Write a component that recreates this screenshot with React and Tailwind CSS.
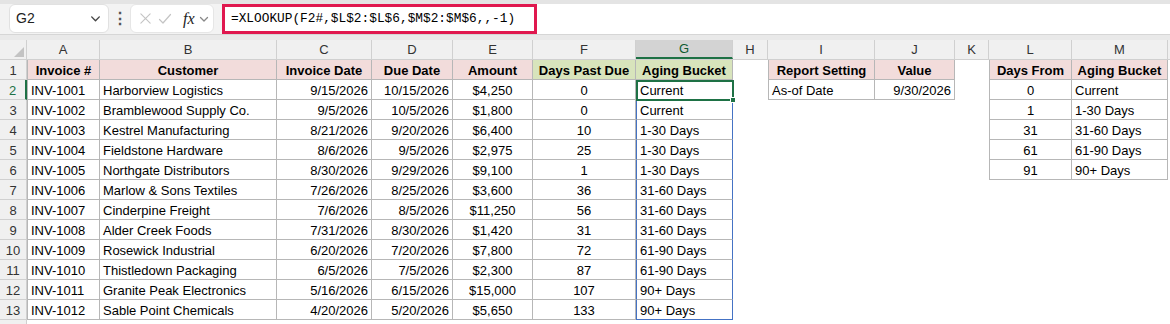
import clsx from 'clsx';

const COLS = [
  { key: 'A', w: 73 },
  { key: 'B', w: 177 },
  { key: 'C', w: 95 },
  { key: 'D', w: 81 },
  { key: 'E', w: 80 },
  { key: 'F', w: 103 },
  { key: 'G', w: 97 },
  { key: 'H', w: 35 },
  { key: 'I', w: 107 },
  { key: 'J', w: 80 },
  { key: 'K', w: 34 },
  { key: 'L', w: 83 },
  { key: 'M', w: 96 },
];

const invoices = [
  ['INV-1001', 'Harborview Logistics', '9/15/2026', '10/15/2026', '$4,250', '0', 'Current'],
  ['INV-1002', 'Bramblewood Supply Co.', '9/5/2026', '10/5/2026', '$1,800', '0', 'Current'],
  ['INV-1003', 'Kestrel Manufacturing', '8/21/2026', '9/20/2026', '$6,400', '10', '1-30 Days'],
  ['INV-1004', 'Fieldstone Hardware', '8/6/2026', '9/5/2026', '$2,975', '25', '1-30 Days'],
  ['INV-1005', 'Northgate Distributors', '8/30/2026', '9/29/2026', '$9,100', '1', '1-30 Days'],
  ['INV-1006', 'Marlow & Sons Textiles', '7/26/2026', '8/25/2026', '$3,600', '36', '31-60 Days'],
  ['INV-1007', 'Cinderpine Freight', '7/6/2026', '8/5/2026', '$11,250', '56', '31-60 Days'],
  ['INV-1008', 'Alder Creek Foods', '7/31/2026', '8/30/2026', '$1,420', '31', '31-60 Days'],
  ['INV-1009', 'Rosewick Industrial', '6/20/2026', '7/20/2026', '$7,800', '72', '61-90 Days'],
  ['INV-1010', 'Thistledown Packaging', '6/5/2026', '7/5/2026', '$2,300', '87', '61-90 Days'],
  ['INV-1011', 'Granite Peak Electronics', '5/16/2026', '6/15/2026', '$15,000', '107', '90+ Days'],
  ['INV-1012', 'Sable Point Chemicals', '4/20/2026', '5/20/2026', '$5,650', '133', '90+ Days'],
];

const buckets = [
  ['0', 'Current'],
  ['1', '1-30 Days'],
  ['31', '31-60 Days'],
  ['61', '61-90 Days'],
  ['91', '90+ Days'],
];

const mainHeaders = ['Invoice #', 'Customer', 'Invoice Date', 'Due Date', 'Amount', 'Days Past Due', 'Aging Bucket'];
const mainAlign = ['left', 'left', 'right', 'right', 'center', 'center', 'left'];

// builds a row of cell descriptors: { text, align, bold, bg, table, left }
function buildRow(r) {
  const cells = {};
  if (r === 1) {
    mainHeaders.forEach((h, i) => {
      cells[COLS[i].key] = { text: h, align: 'center', bold: true, bg: i >= 5 ? 'green' : 'pink', table: true, left: i === 0 };
    });
    cells.I = { text: 'Report Setting', align: 'center', bold: true, bg: 'pink', table: true, left: true };
    cells.J = { text: 'Value', align: 'center', bold: true, bg: 'pink', table: true };
    cells.L = { text: 'Days From', align: 'center', bold: true, bg: 'pink', table: true, left: true };
    cells.M = { text: 'Aging Bucket', align: 'center', bold: true, bg: 'pink', table: true };
  } else {
    const inv = invoices[r - 2];
    if (inv) {
      inv.forEach((v, i) => {
        cells[COLS[i].key] = { text: v, align: mainAlign[i], table: true, left: i === 0, spill: i === 6 };
      });
    }
    if (r === 2) {
      cells.I = { text: 'As-of Date', align: 'left', table: true, left: true };
      cells.J = { text: '9/30/2026', align: 'right', table: true };
    }
    const b = buckets[r - 2];
    if (b) {
      cells.L = { text: b[0], align: 'center', table: true, left: true };
      cells.M = { text: b[1], align: 'left', table: true };
    }
  }
  return cells;
}

function Cell({ col, cell, row }) {
  const c = cell || {};
  return (
    <div
      style={{ width: col.w }}
      className={clsx(
        'h-5 shrink-0 px-[3px] pt-[2px] flex items-center whitespace-nowrap overflow-hidden text-[13px] leading-none text-black',
        c.table && 'border-r border-b border-[#b7b7b7]',
        c.left && 'border-l border-l-[#b7b7b7]',
        c.spill && 'border-l border-r border-l-[#4472c4] border-r-[#4472c4]',
        c.spill && row === 13 && 'border-b-[#4472c4]',
        c.bg === 'pink' && 'bg-[#f2dcdb]',
        c.bg === 'green' && 'bg-[#d8e4bc]',
        c.bold && 'font-bold',
        c.align === 'center' && 'justify-center',
        c.align === 'right' && 'justify-end',
        c.align === 'left' && 'justify-start'
      )}
    >
      {c.text}
    </div>
  );
}

function Chevron({ className }) {
  return (
    <svg viewBox="0 0 12 12" className={className} fill="none" stroke="currentColor" strokeWidth="1.3" strokeLinecap="round" strokeLinejoin="round">
      <path d="M2.5 4.5 6 8l3.5-3.5" />
    </svg>
  );
}

function FormulaBar() {
  return (
    <div className="h-[34px] bg-[#f3f3f3] border-t-4 border-[#e4e4e4] flex items-stretch">
      <div className="ml-[9px] mb-[1px] w-[100px] bg-white rounded-[6px] border border-[#e1e1e1] flex items-center justify-between pl-[6px] pr-[6px]">
        <span className="text-[14px] text-[#222]">G2</span>
        <Chevron className="w-[13px] h-[13px] text-[#444]" />
      </div>
      <div className="w-[21px] flex items-center justify-center text-[#555] text-[16px] font-bold">⋮</div>
      <div className="w-[84px] mb-[1px] bg-white rounded-[6px] border border-[#e6e6e6] flex items-center pl-[8px] gap-[6px]">
        <svg viewBox="0 0 14 14" className="w-[13px] h-[13px] text-[#c4c4c4]" fill="none" stroke="currentColor" strokeWidth="1.2" strokeLinecap="round">
          <path d="M2 2l10 10M12 2 2 12" />
        </svg>
        <svg viewBox="0 0 14 14" className="w-[14px] h-[14px] text-[#c4c4c4]" fill="none" stroke="currentColor" strokeWidth="1.2" strokeLinecap="round" strokeLinejoin="round">
          <path d="M1.5 7.5 5 11l7.5-8.5" />
        </svg>
        <span className="ml-[5px] text-[16px] italic text-[#222]" style={{ fontFamily: '"Liberation Serif", serif' }}>fx</span>
        <Chevron className="w-[12px] h-[12px] text-[#888] -ml-[3px]" />
      </div>
      <div className="ml-[8px] flex-1 bg-white flex items-stretch">
        <div className="w-[315px] border-[3px] border-[#e0184f] flex items-center pl-[6px]">
          <span className="text-[12.8px] text-black" style={{ fontFamily: '"Liberation Mono", monospace' }}>
            =XLOOKUP(F2#,$L$2:$L$6,$M$2:$M$6,,-1)
          </span>
        </div>
      </div>
    </div>
  );
}

export default function App() {
  const rows = Array.from({ length: 14 }, (_, i) => i + 1);
  return (
    <div className="w-[1170px] h-[324px] overflow-hidden bg-white" style={{ fontFamily: '"Liberation Sans", Arial, sans-serif' }}>
      <FormulaBar />
      <div className="h-[6px] bg-[#e9e9e9] border-t border-[#d6d6d6]" />

      {/* column headers */}
      <div className="flex h-5 bg-[#f0f0f0] border-b border-[#d0d0d0]">
        <div className="w-[27px] shrink-0 relative border-r border-[#d0d0d0]">
          <svg viewBox="0 0 10 10" className="absolute right-[2px] bottom-[2px] w-[10px] h-[10px]">
            <path d="M10 0 10 10 0 10Z" fill="#c3c3c3" />
          </svg>
        </div>
        {COLS.map((c) => (
          <div
            key={c.key}
            style={{ width: c.w }}
            className={clsx(
              'shrink-0 flex items-center justify-center pt-[1px] text-[13px] border-r border-[#d0d0d0]',
              c.key === 'G' ? 'bg-[#d3d3d3] text-[#0f5a30] border-b-2 border-b-[#1e7145]' : 'text-[#333]'
            )}
          >
            {c.key}
          </div>
        ))}
        <div className="flex-1" />
      </div>

      {/* grid body */}
      <div className="relative">
        {rows.map((r) => {
          const cells = r <= 13 ? buildRow(r) : {};
          return (
            <div key={r} className="flex h-5">
              <div
                className={clsx(
                  'w-[27px] shrink-0 flex items-center justify-center pt-[2px] text-[13px] bg-[#f0f0f0] border-b border-[#d0d0d0]',
                  r === 2 ? 'text-[#1e7145] border-r-2 border-r-[#1e7145]' : 'text-[#333] border-r border-r-[#d0d0d0]'
                )}
              >
                {r <= 13 ? r : ''}
              </div>
              {COLS.map((c) => (
                <Cell key={c.key} col={c} cell={cells[c.key]} row={r} />
              ))}
            </div>
          );
        })}

        {/* active cell G2 */}
        <div className="absolute left-[636px] top-[20px] w-[98px] h-[21px] border-2 border-[#1e7145] pointer-events-none">
          <div className="absolute -right-[4px] -bottom-[4px] w-[6px] h-[6px] bg-[#1e7145] border border-white" />
        </div>
      </div>
    </div>
  );
}
